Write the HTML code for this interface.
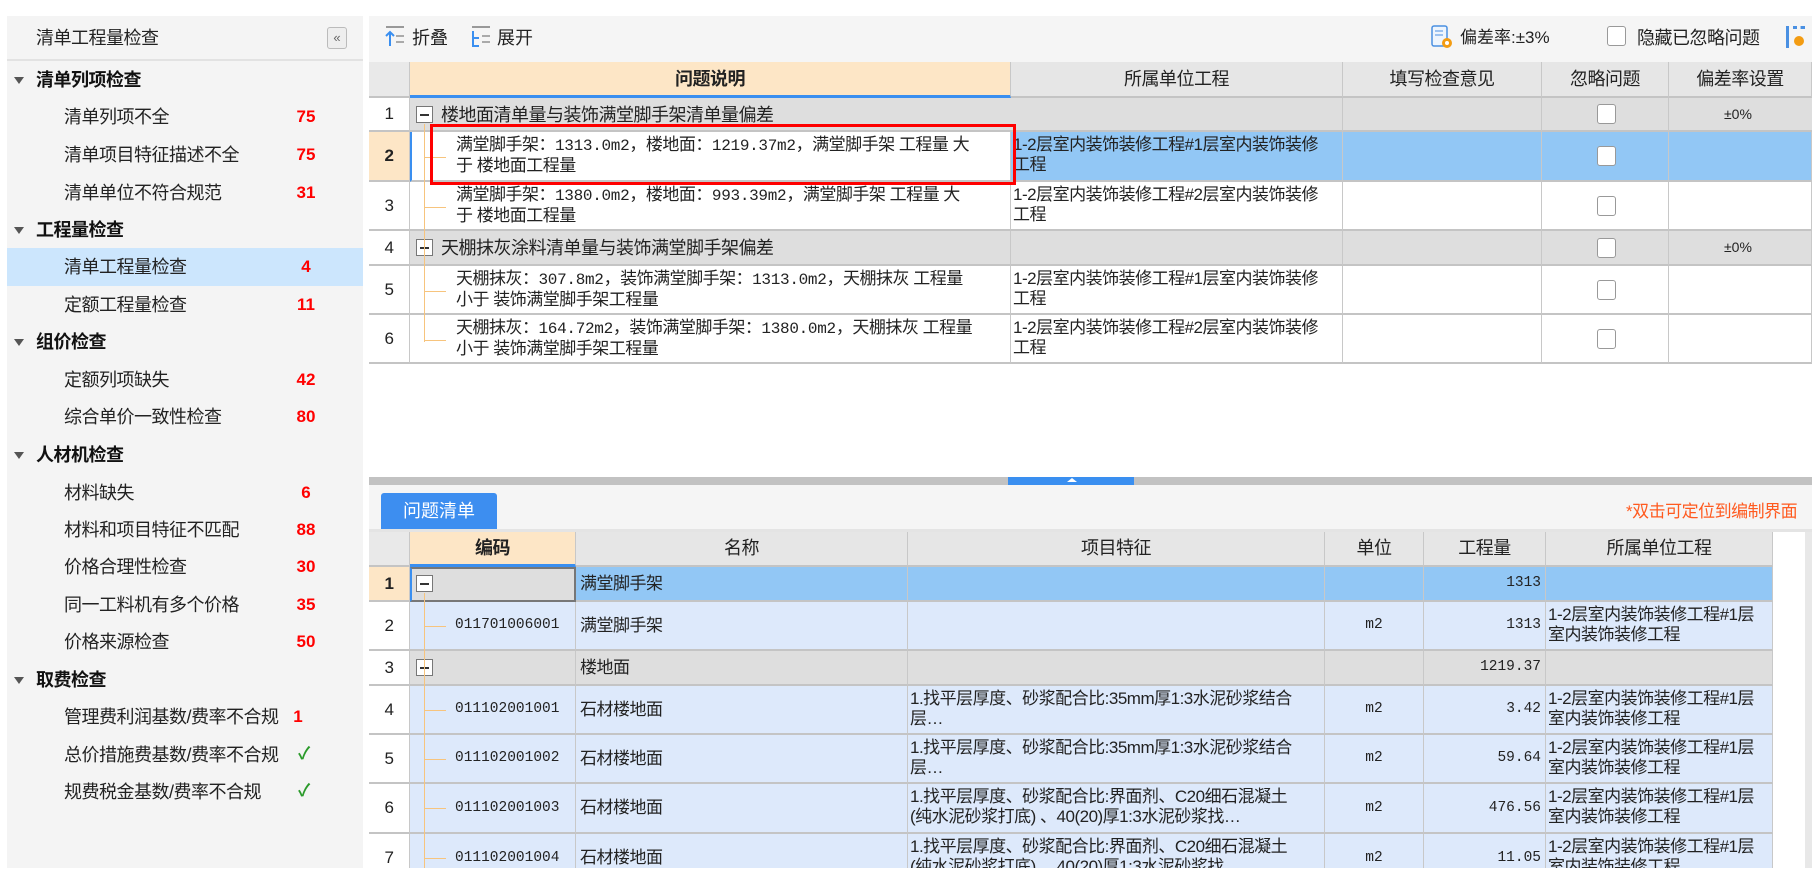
<!DOCTYPE html>
<html><head><meta charset="utf-8">
<style>
*{margin:0;padding:0;box-sizing:border-box}
body{width:1812px;height:875px;background:#fff;position:relative;overflow:hidden;font-family:"Liberation Sans","Noto Sans CJK SC",sans-serif;color:#222}
.a{position:absolute}
.side{left:7px;top:16px;width:356px;height:852px;background:#f4f4f4}
.g{position:absolute;left:36px;font-size:18px;font-weight:bold;color:#111;line-height:24px;letter-spacing:-0.5px}
.tri{position:absolute;left:14px;width:0;height:0;border-left:5px solid transparent;border-right:5px solid transparent;border-top:7px solid #555}
.it{position:absolute;left:64px;font-size:18px;color:#222;line-height:24px;letter-spacing:-0.5px}
.n{position:absolute;left:290px;font-size:17px;font-weight:bold;color:#f00;width:32px;text-align:center;line-height:24px}
.ck{position:absolute;left:298px;font-size:17px;color:#2a9a2a;font-weight:bold;line-height:24px}
.c{position:absolute;border-right:1px solid #c8c8c8;border-bottom:2px solid #c4c4c4;font-size:17px;overflow:hidden;white-space:nowrap;letter-spacing:-0.5px}
.h{background:#e6e6e6;text-align:center;font-size:18px;color:#222}
.mono{font-family:"Liberation Mono","Noto Sans CJK SC",monospace;font-size:14.5px;letter-spacing:0}
.m2{font-family:"Liberation Mono",monospace;font-size:16px;letter-spacing:-0.3px}
.minus{position:absolute;width:17px;height:17px;border:1px solid #777;background:#fff}
.minus:after{content:"";position:absolute;left:3px;top:7px;width:9px;height:1.5px;background:#333}
.cb{position:absolute;width:19px;height:20px;border:1px solid #999;border-radius:3px;background:#fff}
.vl{position:absolute;background:#f7c47d;width:1px}
.hl{position:absolute;background:#f7c47d;height:1px}
.t2{position:absolute;font-size:17px;line-height:20px;letter-spacing:-0.5px;white-space:nowrap}
.w{white-space:normal;line-height:20px;padding:3px 14px 3px 2px;word-break:break-all}
.wf{padding-right:20px}
</style></head><body>
<!-- sidebar -->
<div class="a side"></div>
<div class="a" style="left:36px;top:26px;font-size:18px;color:#222;line-height:24px;letter-spacing:-0.5px">清单工程量检查</div>
<div class="a" style="left:327px;top:27px;width:20px;height:22px;border:1px solid #bbb;border-radius:3px;background:#eee;font-size:13px;color:#666;text-align:center;line-height:19px">«</div>
<div class="a" style="left:7px;top:59px;width:356px;height:2px;background:#e2e2e2"></div>
<div class="a" style="left:7px;top:248px;width:356px;height:38px;background:#cce6fd"></div>
<div class="tri" style="top:77px"></div><div class="g" style="top:68px">清单列项检查</div>
<div class="it" style="top:105px">清单列项不全</div><div class="n" style="top:105px">75</div>
<div class="it" style="top:143px">清单项目特征描述不全</div><div class="n" style="top:143px">75</div>
<div class="it" style="top:181px">清单单位不符合规范</div><div class="n" style="top:181px">31</div>
<div class="tri" style="top:227px"></div><div class="g" style="top:218px">工程量检查</div>
<div class="it" style="top:255px">清单工程量检查</div><div class="n" style="top:255px">4</div>
<div class="it" style="top:293px">定额工程量检查</div><div class="n" style="top:293px">11</div>
<div class="tri" style="top:339px"></div><div class="g" style="top:330px">组价检查</div>
<div class="it" style="top:368px">定额列项缺失</div><div class="n" style="top:368px">42</div>
<div class="it" style="top:405px">综合单价一致性检查</div><div class="n" style="top:405px">80</div>
<div class="tri" style="top:452px"></div><div class="g" style="top:443px">人材机检查</div>
<div class="it" style="top:481px">材料缺失</div><div class="n" style="top:481px">6</div>
<div class="it" style="top:518px">材料和项目特征不匹配</div><div class="n" style="top:518px">88</div>
<div class="it" style="top:555px">价格合理性检查</div><div class="n" style="top:555px">30</div>
<div class="it" style="top:593px">同一工料机有多个价格</div><div class="n" style="top:593px">35</div>
<div class="it" style="top:630px">价格来源检查</div><div class="n" style="top:630px">50</div>
<div class="tri" style="top:677px"></div><div class="g" style="top:668px">取费检查</div>
<div class="it" style="top:705px">管理费利润基数/费率不合规</div><div class="n" style="top:705px;left:288px;width:20px">1</div>
<div class="it" style="top:743px">总价措施费基数/费率不合规</div><div class="ck" style="top:742px">✓</div>
<div class="it" style="top:780px">规费税金基数/费率不合规</div><div class="ck" style="top:779px">✓</div>

<!-- toolbar -->
<div class="a" style="left:369px;top:16px;width:1443px;height:46px;background:#f5f5f5"></div>
<svg class="a" style="left:384px;top:26px" width="22" height="22"><line x1="2" y1="1" x2="20" y2="1" stroke="#999" stroke-width="2"/><path d="M6 20V6M2 10l4-4 4 4" stroke="#3a8ff0" stroke-width="2" fill="none"/><line x1="12" y1="10" x2="20" y2="10" stroke="#aaa" stroke-width="2"/><line x1="12" y1="16" x2="20" y2="16" stroke="#aaa" stroke-width="2"/></svg>
<div class="a" style="left:412px;top:27px;font-size:18px;line-height:22px">折叠</div>
<svg class="a" style="left:470px;top:26px" width="22" height="22"><line x1="2" y1="1" x2="20" y2="1" stroke="#999" stroke-width="2"/><path d="M3 5V20H9M3 12H9" stroke="#3a8ff0" stroke-width="2" fill="none"/><line x1="12" y1="10" x2="20" y2="10" stroke="#aaa" stroke-width="2"/><line x1="12" y1="16" x2="20" y2="16" stroke="#aaa" stroke-width="2"/></svg>
<div class="a" style="left:497px;top:27px;font-size:18px;line-height:22px">展开</div>
<svg class="a" style="left:1431px;top:25px" width="22" height="24"><rect x="1" y="1" width="15" height="20" rx="2" fill="#eef5fd" stroke="#4a90e2" stroke-width="1.5"/><line x1="4" y1="6" x2="12" y2="6" stroke="#4a90e2"/><line x1="4" y1="10" x2="12" y2="10" stroke="#4a90e2"/><circle cx="16" cy="18" r="5" fill="#f39c12"/><circle cx="16" cy="18" r="2" fill="#fff"/></svg>
<div class="a" style="left:1460px;top:26px;font-size:17px;line-height:24px">偏差率:±3%</div>
<div class="cb" style="left:1607px;top:26px"></div>
<div class="a" style="left:1637px;top:26px;font-size:18px;line-height:24px;letter-spacing:-0.5px">隐藏已忽略问题</div>
<div class="a" style="left:1786px;top:26px;width:3px;height:22px;background:#4a90e2"></div>
<div class="a" style="left:1793px;top:26px;width:12px;height:22px;border-top:3px dotted #4a90e2"></div>
<div class="a" style="left:1794px;top:36px;width:10px;height:10px;border-radius:50%;background:#f39c12"></div>

<!-- upper table -->
<div class="a" style="left:369px;top:62px;width:1443px;height:415px;background:#fff"></div>
<div class="c h" style="left:369px;top:62px;width:41px;height:36px;background:#e9e9e9"></div>
<div class="c h" style="left:410px;top:62px;width:601px;height:36px;background:#fde6c6;border-bottom:3px solid #3a8ff0;line-height:34px;font-weight:bold">问题说明</div>
<div class="c h" style="left:1011px;top:62px;width:332px;height:36px;line-height:34px">所属单位工程</div>
<div class="c h" style="left:1343px;top:62px;width:199px;height:36px;line-height:34px">填写检查意见</div>
<div class="c h" style="left:1542px;top:62px;width:127px;height:36px;line-height:34px">忽略问题</div>
<div class="c h" style="left:1669px;top:62px;width:143px;height:36px;line-height:34px">偏差率设置</div>

<!-- row1 -->
<div class="c" style="left:369px;top:98px;width:41px;height:34px;text-align:center;line-height:32px;background:#fff">1</div>
<div class="c" style="left:410px;top:98px;width:1402px;height:34px;background:#dedede;border-right:none"></div>
<div class="c" style="left:1011px;top:98px;width:332px;height:34px;background:#dedede"></div>
<div class="c" style="left:1343px;top:98px;width:199px;height:34px;background:#dedede"></div>
<div class="c" style="left:1542px;top:98px;width:127px;height:34px;background:#dedede"></div>
<div class="minus" style="left:416px;top:106px"></div>
<div class="t2" style="left:441px;top:104px;font-size:18px;line-height:22px">楼地面清单量与装饰满堂脚手架清单量偏差</div>
<div class="cb" style="left:1597px;top:104px"></div>
<div class="a" style="left:1724px;top:106px;font-size:14px">±0%</div>
<!-- row2 -->
<div class="c" style="left:369px;top:132px;width:41px;height:50px;text-align:center;line-height:48px;background:#fde6c6;font-weight:bold;font-size:17px">2</div>
<div class="c" style="left:410px;top:132px;width:601px;height:50px;background:#fff;border-left:2px solid #3a8ff0"></div>
<div class="c w" style="left:1011px;top:132px;width:332px;height:50px;background:#92c7f5">1-2层室内装饰装修工程#1层室内装饰装修工程</div>
<div class="c" style="left:1343px;top:132px;width:199px;height:50px;background:#92c7f5"></div>
<div class="c" style="left:1542px;top:132px;width:127px;height:50px;background:#92c7f5"></div>
<div class="c" style="left:1669px;top:132px;width:143px;height:50px;background:#92c7f5"></div>
<div class="cb" style="left:1597px;top:146px"></div>
<div class="t2" style="left:456px;top:135px">满堂脚手架：<span class="m2">1313.0m2</span>，楼地面：<span class="m2">1219.37m2</span>，满堂脚手架 工程量 大<br>于 楼地面工程量</div>
<!-- row3 -->
<div class="c" style="left:369px;top:182px;width:41px;height:49px;text-align:center;line-height:47px">3</div>
<div class="c" style="left:410px;top:182px;width:601px;height:49px"></div>
<div class="c w" style="left:1011px;top:182px;width:332px;height:49px">1-2层室内装饰装修工程#2层室内装饰装修工程</div>
<div class="c" style="left:1343px;top:182px;width:199px;height:49px"></div>
<div class="c" style="left:1542px;top:182px;width:127px;height:49px"></div>
<div class="c" style="left:1669px;top:182px;width:143px;height:49px"></div>
<div class="cb" style="left:1597px;top:196px"></div>
<div class="t2" style="left:456px;top:185px">满堂脚手架：<span class="m2">1380.0m2</span>，楼地面：<span class="m2">993.39m2</span>，满堂脚手架 工程量 大<br>于 楼地面工程量</div>
<!-- row4 -->
<div class="c" style="left:369px;top:231px;width:41px;height:35px;text-align:center;line-height:33px">4</div>
<div class="c" style="left:410px;top:231px;width:601px;height:35px;background:#dedede"></div>
<div class="c" style="left:1011px;top:231px;width:332px;height:35px;background:#dedede"></div>
<div class="c" style="left:1343px;top:231px;width:199px;height:35px;background:#dedede"></div>
<div class="c" style="left:1542px;top:231px;width:127px;height:35px;background:#dedede"></div>
<div class="c" style="left:1669px;top:231px;width:143px;height:35px;background:#dedede"></div>
<div class="minus" style="left:416px;top:239px"></div>
<div class="t2" style="left:441px;top:237px;font-size:18px;line-height:22px">天棚抹灰涂料清单量与装饰满堂脚手架偏差</div>
<div class="cb" style="left:1597px;top:238px"></div>
<div class="a" style="left:1724px;top:239px;font-size:14px">±0%</div>
<!-- row5 -->
<div class="c" style="left:369px;top:266px;width:41px;height:49px;text-align:center;line-height:47px">5</div>
<div class="c" style="left:410px;top:266px;width:601px;height:49px"></div>
<div class="c w" style="left:1011px;top:266px;width:332px;height:49px">1-2层室内装饰装修工程#1层室内装饰装修工程</div>
<div class="c" style="left:1343px;top:266px;width:199px;height:49px"></div>
<div class="c" style="left:1542px;top:266px;width:127px;height:49px"></div>
<div class="c" style="left:1669px;top:266px;width:143px;height:49px"></div>
<div class="cb" style="left:1597px;top:280px"></div>
<div class="t2" style="left:456px;top:269px">天棚抹灰：<span class="m2">307.8m2</span>，装饰满堂脚手架：<span class="m2">1313.0m2</span>，天棚抹灰 工程量<br>小于 装饰满堂脚手架工程量</div>
<!-- row6 -->
<div class="c" style="left:369px;top:315px;width:41px;height:49px;text-align:center;line-height:47px">6</div>
<div class="c" style="left:410px;top:315px;width:601px;height:49px"></div>
<div class="c w" style="left:1011px;top:315px;width:332px;height:49px">1-2层室内装饰装修工程#2层室内装饰装修工程</div>
<div class="c" style="left:1343px;top:315px;width:199px;height:49px"></div>
<div class="c" style="left:1542px;top:315px;width:127px;height:49px"></div>
<div class="c" style="left:1669px;top:315px;width:143px;height:49px"></div>
<div class="cb" style="left:1597px;top:329px"></div>
<div class="t2" style="left:456px;top:318px">天棚抹灰：<span class="m2">164.72m2</span>，装饰满堂脚手架：<span class="m2">1380.0m2</span>，天棚抹灰 工程量<br>小于 装饰满堂脚手架工程量</div>
<!-- tree lines upper -->
<div class="vl" style="left:424px;top:124px;height:218px"></div>
<div class="hl" style="left:424px;top:157px;width:22px"></div>
<div class="hl" style="left:424px;top:207px;width:22px"></div>
<div class="hl" style="left:424px;top:291px;width:22px"></div>
<div class="hl" style="left:424px;top:340px;width:22px"></div>
<!-- red box -->
<div class="a" style="left:430px;top:124px;width:586px;height:61px;border:3px solid #f00"></div>

<!-- splitter -->
<div class="a" style="left:369px;top:477px;width:1443px;height:8px;background:#c2c2c2"></div>
<div class="a" style="left:1008px;top:477px;width:126px;height:8px;background:#3a8ff0"></div>
<div class="a" style="left:1067px;top:478px;width:0;height:0;border-left:5px solid transparent;border-right:5px solid transparent;border-bottom:4px solid #fff"></div>
<div class="a" style="left:369px;top:485px;width:1443px;height:46px;background:#f5f5f5"></div>
<div class="a" style="left:381px;top:493px;width:116px;height:36px;background:#3d8ef0;border-radius:3px 3px 0 0;color:#fff;font-size:18px;text-align:center;line-height:36px">问题清单</div>
<div class="a" style="left:1626px;top:497px;font-size:17px;color:#ff5a1f;white-space:nowrap;letter-spacing:-0.5px">*双击可定位到编制界面</div>
<div class="a" style="left:369px;top:529px;width:1443px;height:3px;background:#e4e4e4"></div>

<!-- lower table -->
<div class="c h" style="left:369px;top:532px;width:41px;height:35px;background:#e9e9e9"></div>
<div class="c h" style="left:410px;top:532px;width:166px;height:35px;background:#fde6c6;border-bottom:3px solid #3a8ff0;line-height:33px;font-weight:bold">编码</div>
<div class="c h" style="left:576px;top:532px;width:332px;height:35px;line-height:33px">名称</div>
<div class="c h" style="left:908px;top:532px;width:417px;height:35px;line-height:33px">项目特征</div>
<div class="c h" style="left:1325px;top:532px;width:99px;height:35px;line-height:33px">单位</div>
<div class="c h" style="left:1424px;top:532px;width:122px;height:35px;line-height:33px">工程量</div>
<div class="c h" style="left:1546px;top:532px;width:227px;height:35px;line-height:33px">所属单位工程</div>
<div class="a" style="left:1805px;top:532px;width:7px;height:336px;background:#e8e8e8"></div>

<!-- r1 -->
<div class="c" style="left:369px;top:567px;width:41px;height:35px;background:#fde6c6;text-align:center;line-height:33px;font-weight:bold">1</div>
<div class="c" style="left:410px;top:567px;width:166px;height:35px;background:#dedede;border:2px solid #777;border-left:2px solid #3a8ff0"></div>
<div class="c" style="left:576px;top:567px;width:332px;height:35px;background:#92c7f5;line-height:33px;padding-left:4px">满堂脚手架</div>
<div class="c" style="left:908px;top:567px;width:417px;height:35px;background:#92c7f5"></div>
<div class="c" style="left:1325px;top:567px;width:99px;height:35px;background:#92c7f5"></div>
<div class="c mono" style="left:1424px;top:567px;width:122px;height:35px;background:#92c7f5;text-align:right;padding-right:4px;line-height:33px">1313</div>
<div class="c" style="left:1546px;top:567px;width:227px;height:35px;background:#92c7f5"></div>
<div class="minus" style="left:416px;top:575px"></div>

<div class="c" style="left:369px;top:602px;width:41px;height:49px;text-align:center;line-height:47px">2</div>
<div class="c mono" style="left:410px;top:602px;width:166px;height:49px;background:#dde9fb;line-height:47px;padding-left:45px">011701006001</div>
<div class="c" style="left:576px;top:602px;width:332px;height:49px;background:#dde9fb;line-height:47px;padding-left:4px">满堂脚手架</div>
<div class="c" style="left:908px;top:602px;width:417px;height:49px;background:#dde9fb"></div>
<div class="c mono" style="left:1325px;top:602px;width:99px;height:49px;background:#dde9fb;text-align:center;line-height:47px">m2</div>
<div class="c mono" style="left:1424px;top:602px;width:122px;height:49px;background:#dde9fb;text-align:right;padding-right:4px;line-height:47px">1313</div>
<div class="c w" style="left:1546px;top:602px;width:227px;height:49px;background:#dde9fb">1-2层室内装饰装修工程#1层室内装饰装修工程</div>

<div class="c" style="left:369px;top:651px;width:41px;height:35px;text-align:center;line-height:33px">3</div>
<div class="c" style="left:410px;top:651px;width:166px;height:35px;background:#dedede"></div>
<div class="c" style="left:576px;top:651px;width:332px;height:35px;background:#dedede;line-height:33px;padding-left:4px">楼地面</div>
<div class="c" style="left:908px;top:651px;width:417px;height:35px;background:#dedede"></div>
<div class="c" style="left:1325px;top:651px;width:99px;height:35px;background:#dedede"></div>
<div class="c mono" style="left:1424px;top:651px;width:122px;height:35px;background:#dedede;text-align:right;padding-right:4px;line-height:33px">1219.37</div>
<div class="c" style="left:1546px;top:651px;width:227px;height:35px;background:#dedede"></div>
<div class="minus" style="left:416px;top:659px"></div>

<div class="c" style="left:369px;top:686px;width:41px;height:49px;text-align:center;line-height:47px">4</div>
<div class="c mono" style="left:410px;top:686px;width:166px;height:49px;background:#dde9fb;line-height:47px;padding-left:45px">011102001001</div>
<div class="c" style="left:576px;top:686px;width:332px;height:49px;background:#dde9fb;line-height:47px;padding-left:4px">石材楼地面</div>
<div class="c w wf" style="left:908px;top:686px;width:417px;height:49px;background:#dde9fb">1.找平层厚度、砂浆配合比:35mm厚1:3水泥砂浆结合层…</div>
<div class="c mono" style="left:1325px;top:686px;width:99px;height:49px;background:#dde9fb;text-align:center;line-height:47px">m2</div>
<div class="c mono" style="left:1424px;top:686px;width:122px;height:49px;background:#dde9fb;text-align:right;padding-right:4px;line-height:47px">3.42</div>
<div class="c w" style="left:1546px;top:686px;width:227px;height:49px;background:#dde9fb">1-2层室内装饰装修工程#1层室内装饰装修工程</div>

<div class="c" style="left:369px;top:735px;width:41px;height:49px;text-align:center;line-height:47px">5</div>
<div class="c mono" style="left:410px;top:735px;width:166px;height:49px;background:#dde9fb;line-height:47px;padding-left:45px">011102001002</div>
<div class="c" style="left:576px;top:735px;width:332px;height:49px;background:#dde9fb;line-height:47px;padding-left:4px">石材楼地面</div>
<div class="c w wf" style="left:908px;top:735px;width:417px;height:49px;background:#dde9fb">1.找平层厚度、砂浆配合比:35mm厚1:3水泥砂浆结合层…</div>
<div class="c mono" style="left:1325px;top:735px;width:99px;height:49px;background:#dde9fb;text-align:center;line-height:47px">m2</div>
<div class="c mono" style="left:1424px;top:735px;width:122px;height:49px;background:#dde9fb;text-align:right;padding-right:4px;line-height:47px">59.64</div>
<div class="c w" style="left:1546px;top:735px;width:227px;height:49px;background:#dde9fb">1-2层室内装饰装修工程#1层室内装饰装修工程</div>

<div class="c" style="left:369px;top:784px;width:41px;height:50px;text-align:center;line-height:48px">6</div>
<div class="c mono" style="left:410px;top:784px;width:166px;height:50px;background:#dde9fb;line-height:48px;padding-left:45px">011102001003</div>
<div class="c" style="left:576px;top:784px;width:332px;height:50px;background:#dde9fb;line-height:48px;padding-left:4px">石材楼地面</div>
<div class="c w wf" style="left:908px;top:784px;width:417px;height:50px;background:#dde9fb">1.找平层厚度、砂浆配合比:界面剂、C20细石混凝土(纯水泥砂浆打底) 、40(20)厚1:3水泥砂浆找…</div>
<div class="c mono" style="left:1325px;top:784px;width:99px;height:50px;background:#dde9fb;text-align:center;line-height:48px">m2</div>
<div class="c mono" style="left:1424px;top:784px;width:122px;height:50px;background:#dde9fb;text-align:right;padding-right:4px;line-height:48px">476.56</div>
<div class="c w" style="left:1546px;top:784px;width:227px;height:50px;background:#dde9fb">1-2层室内装饰装修工程#1层室内装饰装修工程</div>

<div class="c" style="left:369px;top:834px;width:41px;height:34px;text-align:center;line-height:48px;border-bottom:none">7</div>
<div class="c mono" style="left:410px;top:834px;width:166px;height:34px;background:#dde9fb;line-height:48px;padding-left:45px;border-bottom:none">011102001004</div>
<div class="c" style="left:576px;top:834px;width:332px;height:34px;background:#dde9fb;line-height:48px;padding-left:4px;border-bottom:none">石材楼地面</div>
<div class="c w wf" style="left:908px;top:834px;width:417px;height:34px;background:#dde9fb;border-bottom:none">1.找平层厚度、砂浆配合比:界面剂、C20细石混凝土(纯水泥砂浆打底) 、40(20)厚1:3水泥砂浆找…</div>
<div class="c mono" style="left:1325px;top:834px;width:99px;height:34px;background:#dde9fb;text-align:center;line-height:48px;border-bottom:none">m2</div>
<div class="c mono" style="left:1424px;top:834px;width:122px;height:34px;background:#dde9fb;text-align:right;padding-right:4px;line-height:48px;border-bottom:none">11.05</div>
<div class="c w" style="left:1546px;top:834px;width:227px;height:34px;background:#dde9fb;border-bottom:none">1-2层室内装饰装修工程#1层室内装饰装修工程</div>

<!-- tree lines lower -->
<div class="vl" style="left:424px;top:593px;height:275px"></div>
<div class="hl" style="left:424px;top:626px;width:22px"></div>
<div class="hl" style="left:424px;top:710px;width:22px"></div>
<div class="hl" style="left:424px;top:759px;width:22px"></div>
<div class="hl" style="left:424px;top:808px;width:22px"></div>
<div class="hl" style="left:424px;top:858px;width:22px"></div>
<div class="a" style="left:0;top:868px;width:1812px;height:7px;background:#fff"></div>
</body></html>
